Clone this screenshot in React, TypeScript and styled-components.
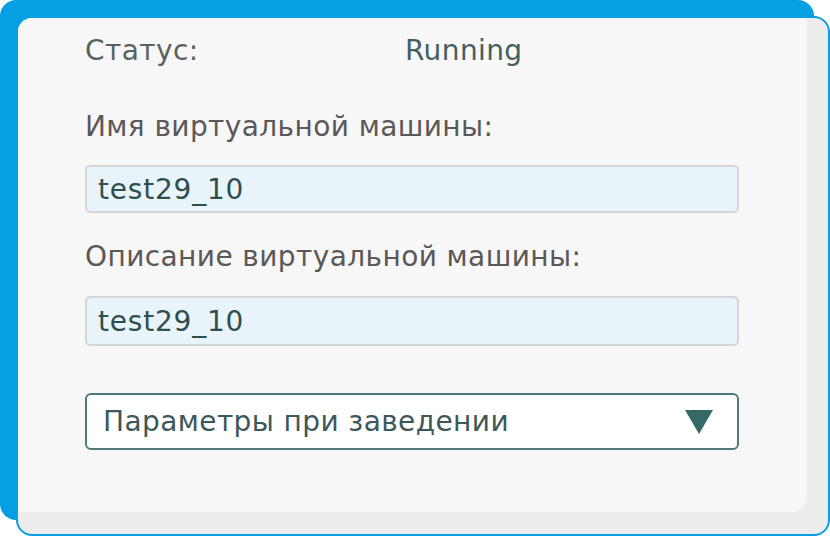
import React from 'react';
import styled, { createGlobalStyle } from 'styled-components';

const GlobalStyle = createGlobalStyle`
  html, body {
    margin: 0;
    padding: 0;
    background: #ffffff;
  }
  body {
    font-family: "DejaVu Sans", Verdana, sans-serif;
    letter-spacing: 0.4px;
  }
`;

// Page wrapper leaves room for the blue frame behind the card
const Page = styled.div`
  width: 830px;
  height: 536px;
  box-sizing: border-box;
  padding: 16px 0 0 16px;
  overflow: hidden;
`;

const Card = styled.div`
  width: 814px;
  height: 520px;
  box-sizing: border-box;
  border: 2px solid #0a9fe0;
  border-radius: 16px;
  background: #ececec;
  box-shadow: -16px -16px 0 0 #05a0e2;
  padding: 0 21px 22px 0;
`;

const Panel = styled.div`
  height: 100%;
  box-sizing: border-box;
  background: #f7f7f7;
  border-radius: 14px 0 15px 0;
  padding: 17px 0 0 67px;
  display: flex;
  flex-direction: column;
`;

const StatusRow = styled.div`
  display: flex;
  align-items: center;
  height: 30px;
  font-size: 28px;
  color: #586262;
`;

const StatusLabel = styled.span`
  width: 320px;
`;

const StatusValue = styled.span`
  color: #455f5f;
`;

const FieldLabel = styled.div<{ $top: number }>`
  margin-top: ${(p) => p.$top}px;
  height: 30px;
  line-height: 30px;
  font-size: 28px;
  color: #5c5858;
`;

const TextField = styled.div<{ $top: number; $height: number }>`
  margin-top: ${(p) => p.$top}px;
  width: 654px;
  height: ${(p) => p.$height}px;
  box-sizing: border-box;
  border: 2px solid #d2d6d6;
  border-radius: 5px;
  background: #e9f4fa;
  display: flex;
  align-items: center;
  padding-left: 11px;
  font-size: 28px;
  letter-spacing: 0.8px;
  color: #2f4f4f;
`;

const Select = styled.div`
  margin-top: 47px;
  width: 654px;
  height: 57px;
  box-sizing: border-box;
  border: 2px solid #4d7a78;
  border-radius: 6px;
  background: #ffffff;
  display: flex;
  align-items: center;
  justify-content: space-between;
  padding: 0 24px 0 16px;
  font-size: 28px;
  color: #3d5858;
`;

const Arrow = styled.span`
  width: 0;
  height: 0;
  border-left: 14px solid transparent;
  border-right: 14px solid transparent;
  border-top: 24px solid #356968;
`;

const App = () => {
  return (
    <>
      <GlobalStyle />
      <Page>
        <Card>
          <Panel>
            <StatusRow>
              <StatusLabel>Статус:</StatusLabel>
              <StatusValue>Running</StatusValue>
            </StatusRow>
            <FieldLabel $top={47}>Имя виртуальной машины:</FieldLabel>
            <TextField $top={23} $height={48}>test29_10</TextField>
            <FieldLabel $top={29}>Описание виртуальной машины:</FieldLabel>
            <TextField $top={24} $height={50}>test29_10</TextField>
            <Select>
              <span>Параметры при заведении</span>
              <Arrow />
            </Select>
          </Panel>
        </Card>
      </Page>
    </>
  );
};

export default App;
